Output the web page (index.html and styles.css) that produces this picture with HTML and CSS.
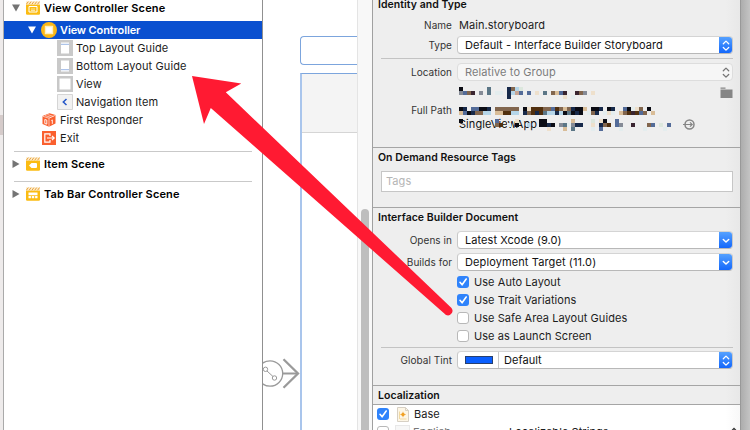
FILE: index.html
```html
<!DOCTYPE html>
<html lang="en">
<head>
<meta charset="utf-8">
<title>Main.storyboard</title>
<link rel="stylesheet" href="styles.css">
</head>
<body>
<svg class="defs" width="0" height="0">
  <defs>
    <symbol id="clap" viewBox="0 0 14 14"><path d="M0 3.2h14V12.5q0 1.2-1.2 1.2H1.2Q0 13.7 0 12.5z" fill="#fbbc13"/><path d="M0 .3h14v3.2H0z" fill="#fdeccb"/><path d="M.3 3.3 2.3.6M3.1 3.3l2-2.7M5.9 3.3l2-2.7M8.7 3.3l2-2.7M11.5 3.3l2-2.7" stroke="#e9a13b" stroke-width="1"/></symbol>
    <symbol id="check" viewBox="0 0 12 12"><path d="M3 6.3 5.1 8.8 9.2 3" fill="none" stroke="#fff" stroke-width="1.6" stroke-linecap="round" stroke-linejoin="round"/></symbol>
    <symbol id="updown" viewBox="0 0 14 17"><path d="M4.3 6.7 7 4.1l2.700 2.600M4.300 10.500 7 13.100l2.700-2.600" fill="none" stroke="currentColor" stroke-width="1.300" stroke-linecap="round" stroke-linejoin="round"/></symbol>
    <symbol id="down" viewBox="0 0 14 17"><path d="M4.300 7.500 7 10l2.700-2.500" fill="none" stroke="currentColor" stroke-width="1.500" stroke-linecap="round" stroke-linejoin="round"/></symbol>
  </defs>
</svg>
<div class="window">
  <div class="edge"><i></i></div>
  <nav class="outline">
    <div class="row scene first"><svg class="tri" viewBox="0 0 8 8"><path d="M0 .5h8L4 7.500z"/></svg><svg class="ico" viewBox="0 0 14 14"><use href="#clap" width="14" height="14"/><path d="M3 5.500h8v5.500H3z" fill="none" stroke="#fff" stroke-width="1"/><path d="M5 8h4M5 9.500h4" stroke="#fff" stroke-width=".6"/></svg><span>View Controller Scene</span></div>
    <div class="row selected"><svg class="tri" viewBox="0 0 8 8"><path d="M0 .5h8L4 7.500z"/></svg><svg class="round" viewBox="0 0 16 16"><circle cx="8" cy="8" r="8" fill="#fbb817"/><path d="M4.500 4.500h7v7h-7z" fill="#fff" stroke="#fff0bd" stroke-width="1.400"/></svg><span>View Controller</span></div>
    <div class="row leaf"><svg viewBox="0 0 16 16"><path d="M0 0h16v16H0z" fill="#c9c9c9"/><path d="M4 2.500h8v11H4z" fill="#fff"/><path d="M4 4.300h8" stroke="#7fa2dd" stroke-width=".8"/></svg><span>Top Layout Guide</span></div>
    <div class="row leaf"><svg viewBox="0 0 16 16"><path d="M0 0h16v16H0z" fill="#c9c9c9"/><path d="M4 2.500h8v11H4z" fill="#fff"/><path d="M4 11.700h8" stroke="#7fa2dd" stroke-width=".8"/></svg><span class="wide">Bottom Layout Guide</span></div>
    <div class="row leaf"><svg viewBox="0 0 16 16"><path d="M0 0h16v16H0z" fill="#c8c8c8"/><path d="M2.500 2.500h11v11h-11z" fill="#fff"/></svg><span>View</span></div>
    <div class="row leaf"><svg viewBox="0 0 16 16"><path d="M.5.5h15v15H.5z" fill="#f1f1f1" stroke="#d5d5d5"/><path d="M9.500 5 6.300 8l3.200 3" fill="none" stroke="#2456c8" stroke-width="1.500"/></svg><span>Navigation Item</span></div>
    <div class="row item"><svg viewBox="0 0 14 14"><path d="M7.500.3 13.500 2v8.500L7 13.800.5 11V3z" fill="#fa602f"/><path d="M.5 3.200 7 5.200l6.500-3M7 5.200v8.500M3 2.500l6.300 2M5.500 1.500l6 2" stroke="#fff" stroke-width=".6" fill="none"/><path d="M2.800 6.500v4l2 .6v-4zM9.300 7.500l1-.6v4" fill="none" stroke="#fff" stroke-width=".9"/></svg><span>First Responder</span></div>
    <div class="row item"><svg viewBox="0 0 14 14"><path d="M0 0h14v14H0z" fill="#fa602f"/><path d="M8 5V2.800H2.800v8.400H8V9M5 7h7M10 4.800 12.200 7 10 9.200" fill="none" stroke="#fff" stroke-width="1.200"/></svg><span>Exit</span></div>
    <hr>
    <div class="row scene"><svg class="tri" viewBox="0 0 8 8"><path d="M.5 0 7.500 4 .5 8z"/></svg><svg class="ico" viewBox="0 0 14 14"><use href="#clap" width="14" height="14"/><path d="M3 8.500 5.500 6H10q1 0 1 1v3q0 1-1 1H5.500z" fill="#fff"/></svg><span>Item Scene</span></div>
    <hr class="second">
    <div class="row scene"><svg class="tri" viewBox="0 0 8 8"><path d="M.5 0 7.500 4 .5 8z"/></svg><svg class="ico" viewBox="0 0 14 14"><use href="#clap" width="14" height="14"/><path d="M2.500 5.500h9v2.700h-9zM2.500 9h2.400v2.200H2.500zM5.800 9h2.400v2.200H5.800zM9.100 9h2.400v2.200H9.100z" fill="#fff"/></svg><span>Tab Bar Controller Scene</span></div>
  </nav>
  <main class="canvas">
    <div class="board">
      <div class="dock"></div>
      <div class="device"><div class="navbar"></div></div>
      <svg class="segue" width="38" height="32" viewBox="0 0 38 32"><g fill="none" stroke="#9a9a9a"><circle cx="8" cy="15.500" r="12.700" stroke-width="1.300"/><circle cx="3.500" cy="11.300" r="2.200"/><circle cx="12.500" cy="20" r="2.200"/><path d="m5 13 6 5.500"/><path d="M21 15.500h14" stroke-width="2"/><path d="M21.500 1.300 36 15.500 21.500 29.700" stroke-width="2.300"/></g></svg>
    </div>
    <div class="gutter"><div class="thumb"></div></div>
  </main>
  <aside class="inspector">
    <section class="identity">
      <h2>Identity and Type</h2>
      <div class="field name"><label>Name</label><span>Main.storyboard</span></div>
      <div class="field type"><label>Type</label><div class="select"><span>Default - Interface Builder Storyboard</span><svg class="btn"><use href="#updown"/></svg></div></div>
      <hr>
      <div class="field location"><label>Location</label><div class="select off"><span>Relative to Group</span><svg class="btn"><use href="#updown"/></svg></div></div>
      <div class="path">
        <label>Full Path</label>
        <div class="redacted"><span>SingleViewApp</span><svg id="mosaic" width="282" height="52"><path d="M263.500 2.500h5v1.200h-5zM263.500 4.500h12V13h-12z" fill="#858585"/><circle cx="232.500" cy="39.500" r="4.500" fill="none" stroke="#858585" stroke-width="1.500"/><path d="M226 39.500h9M233 37.300l2.200 2.200-2.200 2.200" fill="none" stroke="#858585" stroke-width="1.200"/></svg></div>
      </div>
    </section>
    <section class="tags">
      <h2>On Demand Resource Tags</h2>
      <div class="tagbox">Tags</div>
    </section>
    <section class="document">
      <h2>Interface Builder Document</h2>
      <div class="field opens"><label>Opens in</label><div class="select"><span>Latest Xcode (9.0)</span><svg class="btn"><use href="#down"/></svg></div></div>
      <div class="field builds"><label>Builds for</label><div class="select"><span class="wide">Deployment Target (11.0)</span><svg class="btn"><use href="#down"/></svg></div></div>
      <div class="checks">
        <div class="check"><svg class="box on"><use href="#check"/></svg><span>Use Auto Layout</span></div>
        <div class="check"><svg class="box on"><use href="#check"/></svg><span>Use Trait Variations</span></div>
        <div class="check"><i class="box"></i><span>Use Safe Area Layout Guides</span></div>
        <div class="check"><i class="box"></i><span>Use as Launch Screen</span></div>
      </div>
      <hr>
      <div class="field tint"><label>Global Tint</label><div class="select"><i class="swatch"></i><span class="tintname">Default</span><svg class="btn"><use href="#updown"/></svg></div></div>
    </section>
    <section class="loc">
      <h2>Localization</h2>
      <div class="list">
        <div class="lang"><svg class="box on"><use href="#check"/></svg><svg class="doc" viewBox="0 0 12 15"><path d="M.5.5h8l3 3v11H.5z" fill="#fdf6e6" stroke="#d7d0c4"/><path d="M8.500.5v3h3" fill="none" stroke="#d7d0c4"/><path d="M2.500 12V4.500M3 12h6.500" stroke="#f1d9a2" fill="none"/><circle cx="6" cy="7.500" r="1.700" fill="#f0a024"/><path d="M6 4.800v5.400M3.300 7.500h5.400" stroke="#f0a024" stroke-width=".7"/></svg><span>Base</span></div>
        <div class="lang"><i class="box"></i><i class="blank"></i><span class="english">English</span><span class="strings">Localizable Strings</span><svg class="mini" width="8" height="10"><path d="M1.500 4 4 1.500 6.500 4M1.500 7 4 9.500 6.500 7" fill="none" stroke="#333" stroke-width="1.300"/></svg></div>
      </div>
    </section>
  </aside>
  <div class="backdrop"></div>
</div>
<svg class="pointer" width="750" height="430"><path d="M192 76 241.300 83.500 225.800 92.300 451.500 308A4.600 4.600 0 0 1 446 315L210.800 108 204 124z" fill="#ff1a32"/></svg>
<script src="mosaic.js"></script>
</body>
</html>
```
FILE: styles.css
```css
* { box-sizing: border-box; }
body { margin: 0; width: 750px; height: 430px; overflow: hidden; position: relative; font: 11px/18px Inter, "Liberation Sans", sans-serif; color: #1c1c1c; letter-spacing: .06px; white-space: nowrap; }
.defs { position: absolute; }
svg { display: block; flex: none; }
hr { border: 0; margin: 0; height: 1px; background: #c9c9c9; }
.wide { letter-spacing: .11px; }
.window { display: grid; grid-template-columns: 4px 259px 109px 369px 9px; height: 430px; }
.edge { background: #eeebeb; border-right: 1px solid #aaa; padding-top: 115px; }
.edge i { display: block; height: 20px; background: #d5cbca; }

.outline { border-right: 1px solid #909090; overflow: hidden; background: #fff; min-width: 0; }
.row { height: 18px; display: flex; align-items: center; }
.scene { padding-left: 8px; font-weight: 600; color: #000; letter-spacing: .15px; }
.scene.first { margin: -1px 0 4px; }
.tri { width: 8px; height: 8px; fill: #747474; }
.ico { width: 14px; height: 14px; margin: 0 4px 0 6px; }
.selected { background: #0a50d0; color: #fff; padding-left: 24px; font-weight: 600; letter-spacing: -.12px; }
.selected .tri { fill: #fff; }
.round { width: 16px; height: 16px; margin: 0 3px 0 5px; }
.leaf { padding-left: 53px; gap: 3px; }
.leaf svg { width: 16px; height: 16px; }
.item { padding-left: 38px; gap: 4px; }
.item svg { width: 14px; height: 14px; }
.outline hr { margin: 4px 10px 3px; }
.outline hr.second { margin-top: 8px; }

.canvas { display: flex; background: #fff; overflow: hidden; }
.board { flex: 1; overflow: hidden; position: relative; padding: 36px 0 0 37px; }
.dock { height: 29px; border: 1px solid #7ca5dd; border-right: 0; border-radius: 4px 0 0 4px; }
.device { margin-top: 8px; height: 360px; border-top: 1px solid #7ca5dd; border-left: 2px solid #a9c5ec; }
.navbar { height: 59px; background: #f4f4f4; border-bottom: 1px solid #d5d5d5; }
.segue { position: absolute; left: -1px; top: 358px; }
.gutter { width: 15px; background: #f8f8f8; border-left: 1px solid #e4e4e4; padding: 209px 3px 0; }
.thumb { width: 8px; height: 240px; border-radius: 4px; background: #bebebe; }

.inspector { background: linear-gradient(90deg, #eee 96%, #e8e8e8); border-left: 1px solid #a0a0a0; border-right: 1px solid #999; overflow: hidden; min-width: 0; }
.inspector h2 { margin: 0; padding-left: 5px; font-size: 10.5px; letter-spacing: .04px; height: 18px; line-height: 20px; font-weight: 600; color: #111; }
.inspector section + section { border-top: 1px solid #a5a5a5; }
.inspector hr { margin-left: 8px; margin-right: 7px; background: #c3c3c3; }
.identity { height: 152px; }
.inspector .identity h2 { margin-top: -5px; }
.field { display: grid; grid-template-columns: 79px 276px; column-gap: 5px; height: 18px; align-items: center; }
.field label, .path label { text-align: right; font-size: 10px; letter-spacing: .05px; color: #333; }
.name { margin-top: 3px; }
.name span { padding-left: 2px; }
.type { margin-top: 2px; }
.identity hr { margin-top: 4px; }
.location { margin-top: 4px; }
.select { height: 18px; background: #fff; border: 1px solid #c8c8c8; border-top-color: #d4d4d4; border-bottom-color: #b8b8b8; border-radius: 4px; display: flex; align-items: center; padding-left: 7px; color: #111; overflow: hidden; }
.btn { width: 14px; height: 17px; margin: -1px -1px -1px auto; color: #fff; background: linear-gradient(#55a1ff, #1064fb); }
.select.off { background: #f6f6f6; border-color: #ddd; color: #7c7c7c; letter-spacing: .1px; }
.off .btn { background: none; color: #777; }
.path { display: grid; grid-template-columns: 79px 282px; column-gap: 5px; padding-top: 4px; height: 60px; }
.path label { padding-top: 16px; }
.redacted { position: relative; padding-top: 30px; }
.redacted span { padding-left: 2px; color: #111; }
#mosaic { position: absolute; left: 0; top: 0; }

.tags { height: 60px; }
.tagbox { height: 21px; margin: 5px 7px 0 8px; border: 1px solid #c6c6c6; background: #fff; color: #b5b5b5; padding-left: 4px; line-height: 18px; }
.document { height: 178px; }
.opens { margin-top: 5px; }
.builds { margin-top: 4px; }
.checks { padding: 2px 0 0 84px; }
.check { height: 18px; display: flex; align-items: center; gap: 5px; }
.box { width: 12px; height: 12px; flex: none; border-radius: 3px; background: #fff; border: 1px solid #b8b8b8; }
.box.on { background: #2f83fb; border: 0; }
.document hr { margin-top: 2px; }
.tint { margin-top: 3px; }
.swatch { width: 28px; height: 8px; background: #0a5fff; border: 1px solid #28406f; }
.tintname { border-left: 1px solid #c8c8c8; margin-left: 5px; padding-left: 5px; height: 18px; line-height: 18px; }
.loc h2 { border-bottom: 1px solid #a5a5a5; height: 19px; }
.list { background: linear-gradient(90deg, #fff 96%, #f8f8f8); height: 30px; }
.lang { height: 18px; display: flex; align-items: center; padding-left: 4px; }
.doc { width: 12px; height: 15px; margin: 0 5px 0 8px; }
.blank { width: 15px; height: 15px; margin: 0 3px 0 6px; background: #f7f7f7; border: 1px solid #e8e8e8; }
.english { color: #777; }
.strings { margin-left: 58px; }
.mini { margin: 0 2px 0 auto; }
.backdrop { background: linear-gradient(90deg, #adadad, #c4c4c4); }
.pointer { position: absolute; left: 0; top: 0; }
```
FILE: mosaic.js
```js
const palette = {
  k: '#0b0c14', n: '#17294a', d: '#3a2530', b: '#82664e', o: '#51300f', t: '#d9bd98',
  c: '#eee0cc', l: '#b5d5e8', p: '#e4edee', s: '#5b7686', u: '#536b98', g: '#858b96',
  r: '#c7a594', w: '#dce7dd'
};
const bands = [
  [2, 'k......s....nblw'],
  [6, 'gubd.g.s.pp.nlru.u.c.s.btud..dbg.c'],
  [10, '............n.............c.p'],
  [22, 'kn.uukkn.bbbbbb.kcooobbuobtbnkkt.kkn.kn..ukpcb.k'],
  [26, 'tuknbbll.ttooll.nbonosllnlksknk.pbn.pcp.tbodoub.t'],
  [34, 'k........u....c.....kk......t....w.ck..u.'],
  [38, '.........bo.p.k..l..kknk.gspgnn..c.nbo.ug..d...bu.w.u'],
  [42, '......................c...t.s....p.u....p.....p....p']
];
const svg = document.getElementById('mosaic');
for (const [y, cells] of bands) {
  [...cells].forEach((key, i) => {
    if (key === '.') return;
    const rect = document.createElementNS('http://www.w3.org/2000/svg', 'rect');
    rect.setAttribute('x', 2 + i * 4);
    rect.setAttribute('y', y);
    rect.setAttribute('width', 4);
    rect.setAttribute('height', 4);
    rect.setAttribute('fill', palette[key]);
    svg.appendChild(rect);
  });
}
```
